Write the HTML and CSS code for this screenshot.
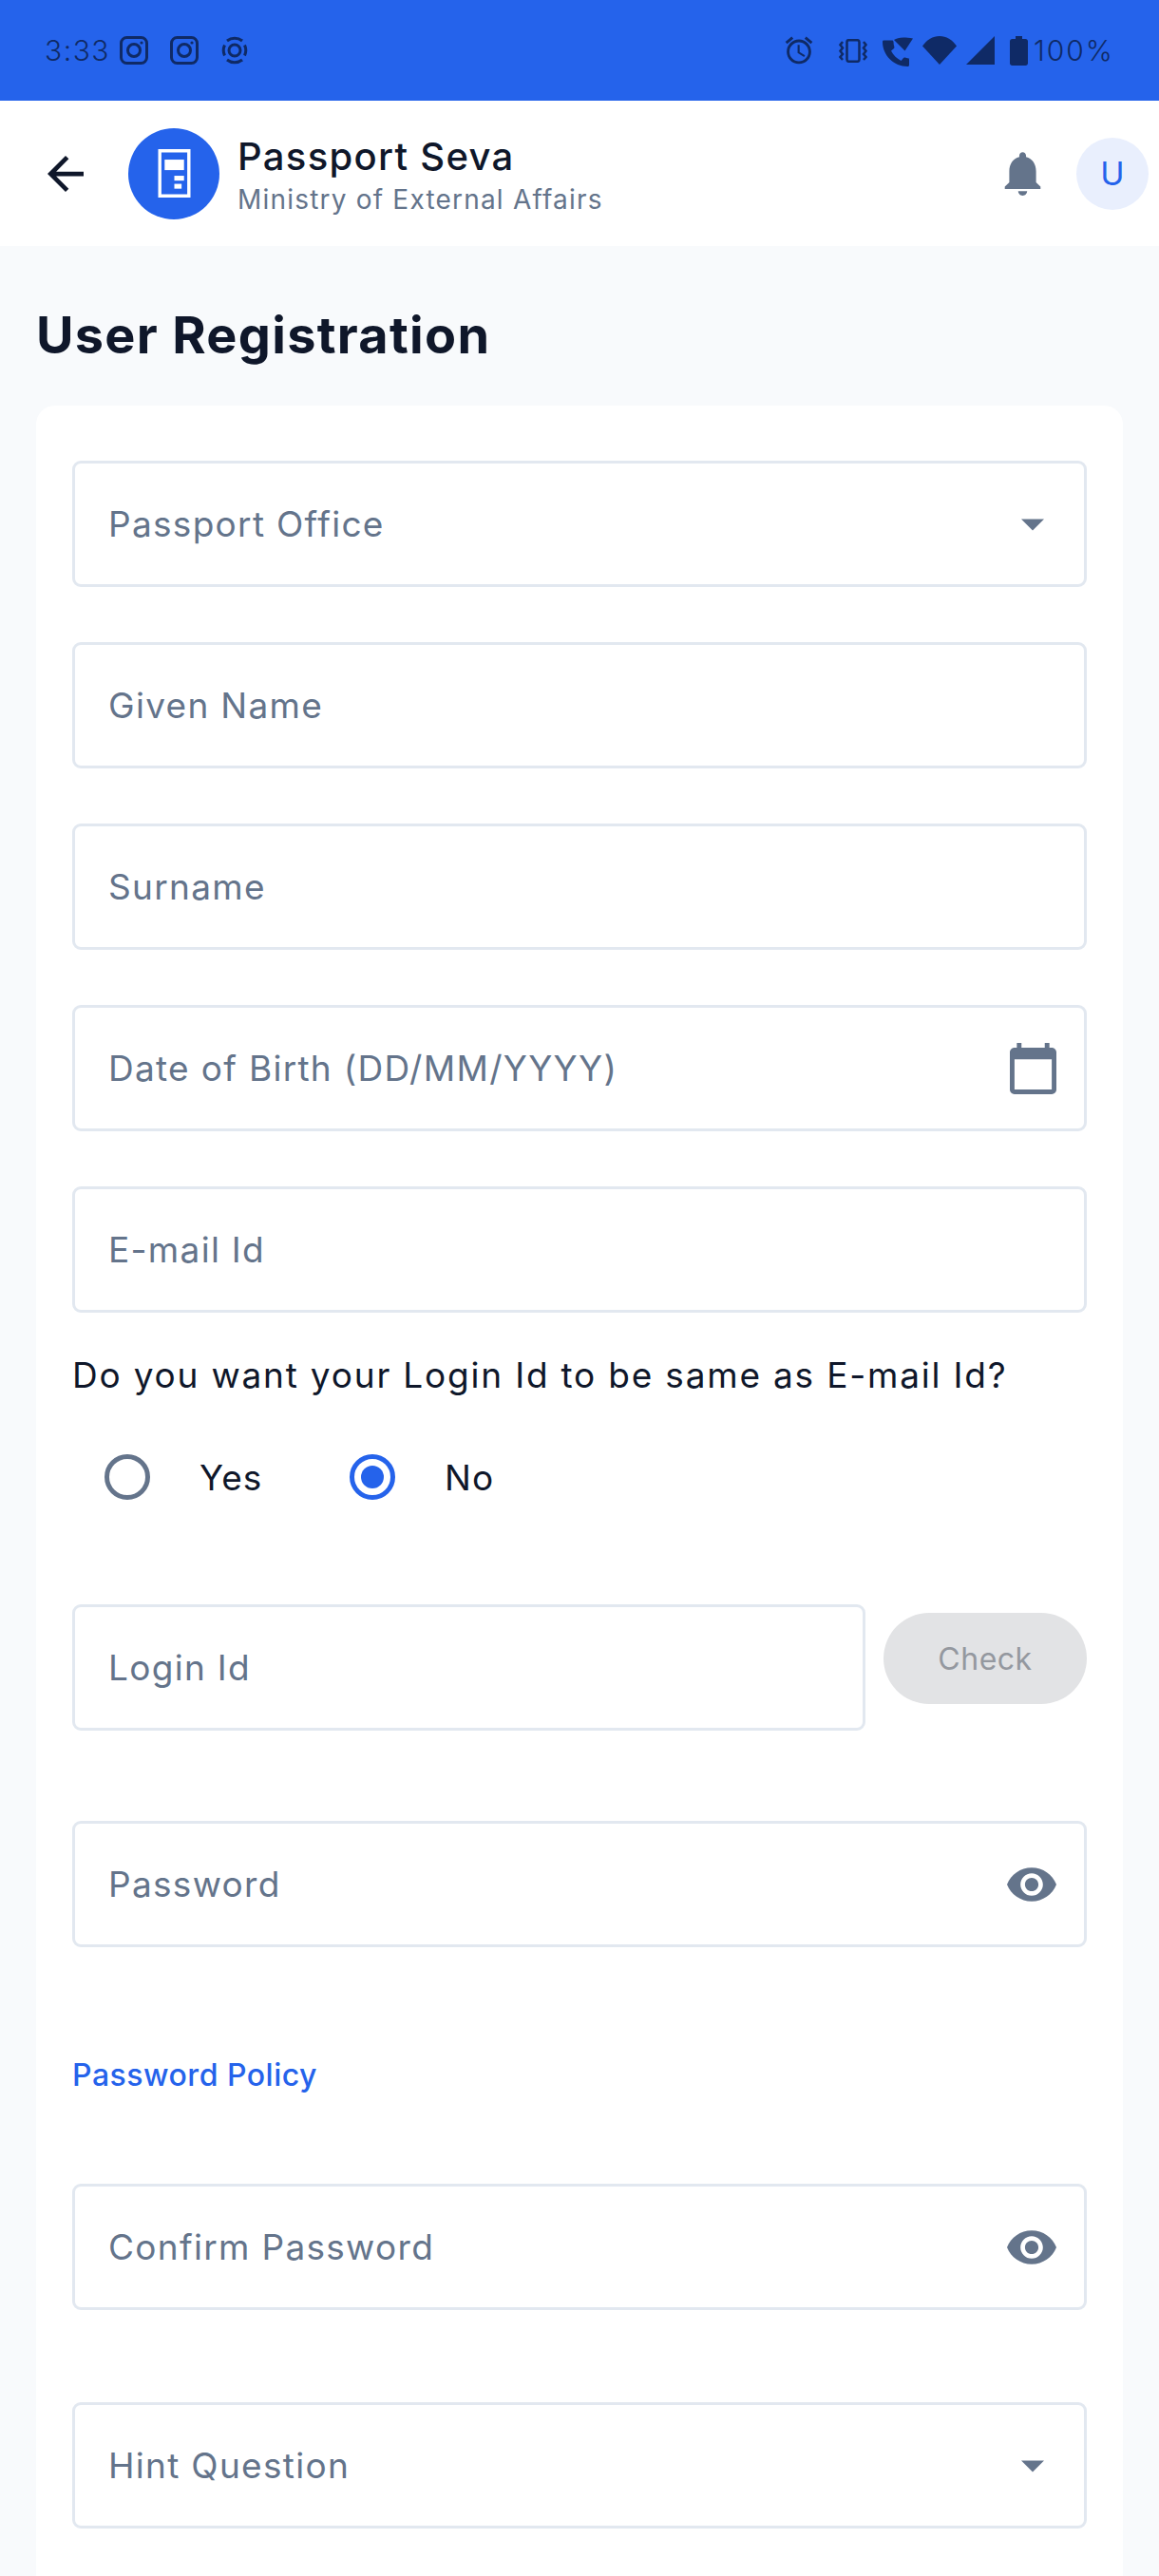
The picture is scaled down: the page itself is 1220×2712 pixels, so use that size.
FILE: index.html
```html
<!DOCTYPE html>
<html>
<head>
<meta charset="utf-8" />
<meta name="viewport" content="width=device-width, initial-scale=1" />
<title>Passport Seva</title>
<link rel="stylesheet" href="styles.css">
</head>
<body>
<div class="statusbar">
	<div class="status-left">
		<span class="time">3:33</span>
		<svg class="insta" viewBox="0 0 30 30"><rect x="1.5" y="1.5" width="27" height="27" rx="6" /><circle cx="15" cy="15" r="6.5" /><circle class="dot" cx="23" cy="7" r="1.6" /></svg>
		<svg class="insta" viewBox="0 0 30 30"><rect x="1.5" y="1.5" width="27" height="27" rx="6" /><circle cx="15" cy="15" r="6.5" /><circle class="dot" cx="23" cy="7" r="1.6" /></svg>
		<svg class="insta" viewBox="0 0 30 30"><path d="M7 5a13 13 0 0 1 16 0M7 25a13 13 0 0 0 16 0M4.500 9.500a13 13 0 0 0 0 11M25.500 9.500a13 13 0 0 1 0 11" /><circle cx="15" cy="15" r="6" /></svg>
	</div>
	<div class="status-right">
		<svg class="alarm" viewBox="1.500 1.500 21 21"><path d="M22 5.720l-4.600-3.860-1.290 1.530 4.600 3.860L22 5.720zM7.880 3.390L6.600 1.860 2 5.710l1.290 1.530 4.590-3.850zM12.500 8H11v6l4.750 2.850.75-1.230-4-2.370V8zM12 4c-4.970 0-9 4.030-9 9s4.030 9 9 9 9-4.030 9-9-4.030-9-9-9zm0 16c-3.870 0-7-3.130-7-7s3.130-7 7-7 7 3.130 7 7-3.130 7-7 7z" /></svg>
		<svg class="vibrate" viewBox="0 0 30 25"><rect x="8.500" y="1.200" width="13" height="22.600" rx="2" /><path d="M4 3l-2.500 3.200L4 9.500l-2.500 3.200L4 16l-2.500 3L4 22M26 3l2.500 3.200L26 9.500l2.500 3.200L26 16l2.500 3L26 22" /></svg>
		<svg class="wificall" viewBox="0 0 33 33"><path class="fill" d="M12 5c4-2.500 9-3.500 20-1.500l-8.500 13z" /><path class="fill" d="M29 24.500c-2 0-3.800-.3-5.500-.9-.5-.2-1.100 0-1.500.4l-2.400 3c-4.300-2.100-8.400-6-10.600-10.500l3-2.600c.4-.4.500-1 .4-1.500-.6-1.700-.9-3.500-.9-5.400 0-.8-.700-1.500-1.500-1.500H1.500C.7 5.500 0 5.900 0 7c0 14.300 11.700 26 26.500 26 1.100 0 1.500-1 1.500-1.800v-5.200c0-.8-.2-1.500-1-1.500z" /></svg>
		<svg class="wifi" viewBox="0 0 36 30"><path class="fill" d="M0 10.500C4.500 4 11 0 18 0s13.500 4 18 10.500L18 30z" /></svg>
		<svg class="signal" viewBox="0 0 30 30"><path class="fill" d="M30 0v30H0z" /></svg>
		<svg class="battery" viewBox="0 0 19 31"><path class="fill" d="M6 0h7v3h3.500c1.400 0 2.500 1.100 2.500 2.500v23c0 1.400-1.100 2.500-2.500 2.500h-14C1.100 31 0 29.900 0 28.500v-23C0 4.100 1.100 3 2.500 3H6z" /></svg>
		<span class="percent">100%</span>
	</div>
</div>

<div class="appbar">
	<svg class="back" viewBox="4 4 16 16"><path d="M20 11H7.830l5.590-5.590L12 4l-8 8 8 8 1.410-1.410L7.830 13H20v-2z" /></svg>
	<div class="logo">
		<svg viewBox="0 0 40 60"><path d="M0 0h40v60H0z M4 4v52h32V4z" fill-rule="evenodd" /><rect x="8" y="13" width="24" height="13" /><rect x="20" y="33" width="12" height="6" /><rect x="20" y="43" width="9" height="6" /></svg>
	</div>
	<div class="brand">
		<div class="brand-name">Passport Seva</div>
		<div class="brand-sub">Ministry of External Affairs</div>
	</div>
	<svg class="bell" viewBox="4 2 16 20"><path d="M12 22c1.100 0 2-.9 2-2h-4c0 1.100.9 2 2 2zm6-6v-5c0-3.070-1.640-5.640-4.500-6.320V4c0-.83-.67-1.500-1.500-1.500s-1.500.67-1.500 1.500v.68C7.630 5.360 6 7.920 6 11v5l-2 2v1h16v-1l-2-2z" /></svg>
	<div class="avatar">U</div>
</div>

<div class="page">
	<h1>User Registration</h1>
	<div class="card">
		<div class="field">
			<span>Passport Office</span>
			<svg class="caret" viewBox="7 10 10 5"><path d="M7 10l5 5 5-5z" /></svg>
		</div>
		<div class="field"><span>Given Name</span></div>
		<div class="field"><span>Surname</span></div>
		<div class="field">
			<span>Date of Birth (DD/MM/YYYY)</span>
			<svg class="calendar" viewBox="2 1 20 22"><path d="M20 3h-1V1h-2v2H7V1H5v2H4c-1.100 0-2 .9-2 2v16c0 1.100.9 2 2 2h16c1.100 0 2-.9 2-2V5c0-1.100-.9-2-2-2zm0 18H4V8h16v13z" /></svg>
		</div>
		<div class="field"><span>E-mail Id</span></div>

		<div class="question">Do you want your Login Id to be same as E-mail Id?</div>
		<div class="radios">
			<div class="radio"><i class="ring"></i><span>Yes</span></div>
			<div class="radio on"><i class="ring"></i><span>No</span></div>
		</div>

		<div class="login-row">
			<div class="field"><span>Login Id</span></div>
			<div class="check">Check</div>
		</div>

		<div class="field password">
			<span>Password</span>
			<svg class="eye" viewBox="1 4.500 22 15"><path d="M12 4.500C7 4.500 2.730 7.610 1 12c1.730 4.390 6 7.500 11 7.500s9.270-3.110 11-7.500c-1.730-4.390-6-7.500-11-7.500zM12 17c-2.760 0-5-2.240-5-5s2.240-5 5-5 5 2.240 5 5-2.240 5-5 5zm0-8c-1.660 0-3 1.340-3 3s1.340 3 3 3 3-1.340 3-3-1.340-3-3-3z" /></svg>
		</div>
		<div class="policy">Password Policy</div>
		<div class="field confirm">
			<span>Confirm Password</span>
			<svg class="eye" viewBox="1 4.500 22 15"><path d="M12 4.500C7 4.500 2.730 7.610 1 12c1.730 4.390 6 7.500 11 7.500s9.270-3.110 11-7.500c-1.730-4.390-6-7.500-11-7.500zM12 17c-2.760 0-5-2.240-5-5s2.240-5 5-5 5 2.240 5 5-2.240 5-5 5zm0-8c-1.660 0-3 1.340-3 3s1.340 3 3 3 3-1.340 3-3-1.340-3-3-3z" /></svg>
		</div>
		<div class="field hint">
			<span>Hint Question</span>
			<svg class="caret" viewBox="7 10 10 5"><path d="M7 10l5 5 5-5z" /></svg>
		</div>
	</div>
</div>
</body>
</html>
```

FILE: styles.css
```css
* {box-sizing: border-box;}
html, body {margin: 0; height: 2712px; overflow: hidden;}
body {background: #f8fafc; font-family: Inter, "Liberation Sans", sans-serif; color: #0f172a;}

/* status bar */
.statusbar {height: 106px; background: #2563eb; color: #0f2a66; display: flex; justify-content: space-between; align-items: center; padding: 0 47px 0 47px;}
.statusbar svg {display: block; fill: none; stroke: #0f2a66;}
.statusbar .fill {fill: #0f2a66; stroke: none;}
.status-left {display: flex; align-items: center;}
.status-right {display: flex; align-items: center;}
.time {font-size: 30px; font-weight: 300; letter-spacing: 1.500px; width: 79px;}
.insta {width: 30px; height: 30px; stroke-width: 3; margin-right: 23px;}
.insta .dot {fill: #0f2a66; stroke: none;}
.alarm {width: 30px; height: 30px; fill: #0f2a66 !important; stroke: none !important; margin-right: 27px;}
.vibrate {width: 30px; height: 25px; stroke-width: 2.500; margin-right: 16px;}
.wificall {width: 33px; height: 33px; margin-right: 9px;}
.wifi {width: 36px; height: 30px; margin-right: 10px;}
.signal {width: 30px; height: 30px; margin-right: 16px;}
.battery {width: 19px; height: 31px; margin-right: 6px;}
.percent {font-size: 30px; font-weight: 300; width: 85px; letter-spacing: 2px; white-space: nowrap;}

/* app bar */
.appbar {height: 153px; background: #fff; display: flex; align-items: center; padding: 0 11px 0 50px;}
.back {width: 38px; height: 38px; fill: #0f172a; margin-right: 47px;}
.logo {width: 96px; height: 96px; border-radius: 50%; background: #2563eb; display: flex; align-items: center; justify-content: center; margin-right: 19px;}
.logo svg {width: 39px; height: 51px; fill: #fff;}
.brand {flex: 1; padding-top: 3px;}
.brand-name {font-size: 40px; font-weight: 500; line-height: 48px; letter-spacing: 1.300px;}
.brand-sub {font-size: 28px; color: #64748b; line-height: 36px; letter-spacing: 1.200px; margin-top: 3px;}
.bell {width: 39px; height: 47px; fill: #64748b; margin-right: 37px;}
.avatar {width: 76px; height: 76px; border-radius: 50%; background: #e9effd; color: #2563eb; font-size: 34px; display: flex; align-items: center; justify-content: center;}

/* form */
.page {padding: 0 38px;}
h1 {margin: 0; padding-top: 60px; height: 168px; font-size: 54px; line-height: 68px; font-weight: 700; letter-spacing: 1.300px;}
.card {background: #fff; border-radius: 20px 20px 0 0; padding: 58px 38px 0; height: 2400px;}
.field {height: 133px; border: 3px solid #e2e8f0; border-radius: 9px; display: flex; align-items: center; justify-content: space-between; padding: 0 29px 0 35px; margin-bottom: 58px; font-size: 37px; color: #64748b; letter-spacing: 1.300px;}
.field svg {display: block; fill: #64748b;}
.caret {width: 24px; height: 13px; margin-right: 13px; margin-top: 2px;}
.calendar {width: 49px; height: 54px; margin-right: 0;}
.eye {width: 52px; height: 36px;}
.question {font-size: 37px; letter-spacing: 1.800px; line-height: 46px; margin-top: -15px;}
.radios {display: flex; margin-top: 60px; padding-left: 34px;}
.radio {display: flex; align-items: center; font-size: 37px; letter-spacing: 1px; width: 258px;}
.radio span {margin-left: 52px;}
.ring {display: block; width: 48px; height: 48px; border-radius: 50%; border: 5px solid #64748b;}
.on .ring {border-color: #2563eb; background: #2563eb; background-clip: content-box; padding: 7px;}
.login-row {display: flex; align-items: flex-start; margin-top: 110px;}
.login-row .field {width: 835px; margin-bottom: 0;}
.check {width: 214px; height: 96px; margin-left: 19px; margin-top: 9px; border-radius: 48px; background: #e2e3e5; color: #94989f; font-size: 32px; letter-spacing: .5px; display: flex; align-items: center; justify-content: center;}
.password {margin-top: 95px; margin-bottom: 0;}
.policy {color: #2563eb; font-size: 32px; font-weight: 500; line-height: 40px; letter-spacing: .5px; margin-top: 115px;}
.confirm {margin-top: 94px; margin-bottom: 97px;}
```
